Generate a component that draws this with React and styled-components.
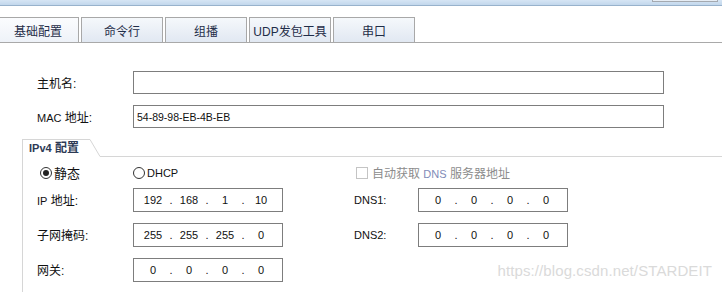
import React from "react";
import styled, { createGlobalStyle } from "styled-components";

const Global = createGlobalStyle`
  html, body { margin: 0; padding: 0; background: #fff; }
  body { font-family: "Noto Sans CJK SC", "Liberation Sans", sans-serif; }
  * { box-sizing: border-box; }
`;

const Page = styled.div`
  position: relative;
  width: 722px;
  height: 292px;
  overflow: hidden;
  background: #fff;
  font-family: "Liberation Sans", "Noto Sans CJK SC", sans-serif;
  color: #111;
`;

const TopBar = styled.div`
  height: 6px;
  background: linear-gradient(#d6e5f4, #c2d7ec);
  border-bottom: 1px solid #98b2cc;
  display: flex;
  justify-content: flex-end;
  padding-right: 4px;
`;

const TopTab = styled.div`
  width: 66px;
  height: 2px;
  background: #e6edf5;
  border: 1px solid #a4a9b0;
  border-top: none;
`;

const TabStrip = styled.div`
  display: flex;
  gap: 2px;
  margin-top: 11px;
  margin-left: -3px;
  width: 725px;
  border-bottom: 1px solid #a9a9a9;
`;

const Tab = styled.div`
  width: 82px;
  height: 25px;
  border: 1px solid #a8a8a8;
  border-bottom: none;
  background: ${(p) =>
    p.$active
      ? "linear-gradient(#fbfcfe, #eef2f8)"
      : "linear-gradient(#f5f8fb, #e1e8f2)"};
  display: flex;
  align-items: center;
  justify-content: center;
  font-size: 12px;
  color: #1f2d48;
  padding-top: 1px;
`;

const Form = styled.div`
  padding-top: 28px;
`;

const FieldRow = styled.div`
  display: grid;
  grid-template-columns: 96px 531px;
  align-items: center;
  padding-left: 37px;
  height: 23px;
  margin-bottom: 11px;
`;

const Label = styled.span`
  font-size: 12px;
  color: #111;
  white-space: nowrap;
  margin-top: -1px;
`;

const TextBox = styled.div`
  height: 23px;
  border: 1px solid #7d7d7d;
  display: flex;
  align-items: center;
  padding-left: 3px;
  font-size: 10.5px;
  color: #111;
`;

const Group = styled.div`
  margin-left: 22px;
`;

const GroupHeader = styled.div`
  display: flex;
  height: 18px;
`;

const Legend = styled.div`
  width: 68px;
  border-top: 1px solid #d6d6d6;
  border-left: 1px solid #d6d6d6;
  font-size: 12px;
  font-weight: bold;
  color: #2d3a55;
  padding-left: 6px;
  line-height: 16px;
  white-space: nowrap;
`;

const Slant = styled.svg`
  display: block;
  flex: none;
`;

const HeaderLine = styled.div`
  flex: 1;
  border-bottom: 1px solid #d6d6d6;
`;

const GroupBody = styled.div`
  border-left: 1px solid #d6d6d6;
  padding-left: 14px;
  padding-top: 6px;
  height: 140px;
`;

const Grid = styled.div`
  display: grid;
  grid-template-columns: 96px 150px 71px 64px 150px;
  align-items: center;
  height: ${(p) => p.$h}px;
  margin-bottom: ${(p) => p.$mb}px;
`;

const Choice = styled.label`
  display: flex;
  align-items: center;
  gap: 2px;
  font-size: ${(p) => (p.$big ? 13 : 12)}px;
  color: ${(p) => (p.$disabled ? "#8c8c8c" : "#111")};
  margin-left: ${(p) => p.$ml || 0}px;
  white-space: nowrap;
  grid-column: ${(p) => p.$col || "auto"};
`;

const Radio = styled.span`
  width: 12px;
  height: 12px;
  border-radius: 50%;
  border: 1px solid #333;
  background: #fff;
  display: flex;
  align-items: center;
  justify-content: center;
  &::after {
    content: "";
    width: 6px;
    height: 6px;
    border-radius: 50%;
    background: ${(p) => (p.$checked ? "#222" : "transparent")};
  }
`;

const Check = styled.span`
  width: 12px;
  height: 12px;
  border: 1px solid #c4c4c4;
  background: #fff;
  margin-right: 2px;
`;

const Latin = styled.span`
  font-family: "Liberation Sans", sans-serif;
  font-size: 11px;
  color: ${(p) => p.$color || "inherit"};
`;

const IpBox = styled.div`
  height: 24px;
  width: 150px;
  border: 1px solid #7d7d7d;
  display: flex;
  align-items: center;
  padding-left: 4px;
  font-size: 11px;
  color: #111;
`;

const Seg = styled.span`
  width: 30px;
  text-align: center;
`;

const Dot = styled.span`
  width: 6px;
  text-align: center;
`;

const Watermark = styled.div`
  position: absolute;
  right: 10px;
  top: 262px;
  font-family: "Liberation Sans", sans-serif;
  font-size: 15px;
  color: #dadada;
  letter-spacing: 0.1px;
`;

const IpField = ({ value }) => {
  const parts = value.split(".");
  return (
    <IpBox>
      {parts.map((p, i) => (
        <React.Fragment key={i}>
          <Seg>{p}</Seg>
          {i < 3 && <Dot>.</Dot>}
        </React.Fragment>
      ))}
    </IpBox>
  );
};

const tabs = ["基础配置", "命令行", "组播", "UDP发包工具", "串口"];

export default function App() {
  return (
    <>
      <Global />
      <Page>
        <TopBar>
          <TopTab />
        </TopBar>
        <TabStrip>
          {tabs.map((t, i) => (
            <Tab key={t} $active={i === 0}>
              {t}
            </Tab>
          ))}
        </TabStrip>
        <Form>
          <FieldRow>
            <Label>主机名:</Label>
            <TextBox />
          </FieldRow>
          <FieldRow>
            <Label>
              <Latin>MAC</Latin> 地址:
            </Label>
            <TextBox>54-89-98-EB-4B-EB</TextBox>
          </FieldRow>
          <Group>
            <GroupHeader>
              <Legend>
                <Latin>IPv4</Latin> 配置
              </Legend>
              <Slant width="10" height="18" viewBox="0 0 10 18">
                <line x1="0" y1="0.5" x2="10" y2="17.5" stroke="#d6d6d6" strokeWidth="1" />
              </Slant>
              <HeaderLine />
            </GroupHeader>
            <GroupBody>
              <Grid $h={14} $mb={11}>
                <Choice $ml={3} $big>
                  <Radio $checked />
                  静态
                </Choice>
                <Choice>
                  <Radio />
                  <Latin>DHCP</Latin>
                </Choice>
                <Choice $disabled $col="4 / span 2" $ml={2}>
                  <Check />
                  <span>
                    自动获取 <Latin $color="#7f8bb8">DNS</Latin> 服务器地址
                  </span>
                </Choice>
              </Grid>
              <Grid $h={24} $mb={11}>
                <Label>
                  <Latin>IP</Latin> 地址:
                </Label>
                <IpField value="192.168.1.10" />
                <span />
                <Label>
                  <Latin>DNS1:</Latin>
                </Label>
                <IpField value="0.0.0.0" />
              </Grid>
              <Grid $h={24} $mb={11}>
                <Label>子网掩码:</Label>
                <IpField value="255.255.255.0" />
                <span />
                <Label>
                  <Latin>DNS2:</Latin>
                </Label>
                <IpField value="0.0.0.0" />
              </Grid>
              <Grid $h={24} $mb={0}>
                <Label>网关:</Label>
                <IpField value="0.0.0.0" />
              </Grid>
            </GroupBody>
          </Group>
        </Form>
        <Watermark>https://blog.csdn.net/STARDEIT</Watermark>
      </Page>
    </>
  );
}
